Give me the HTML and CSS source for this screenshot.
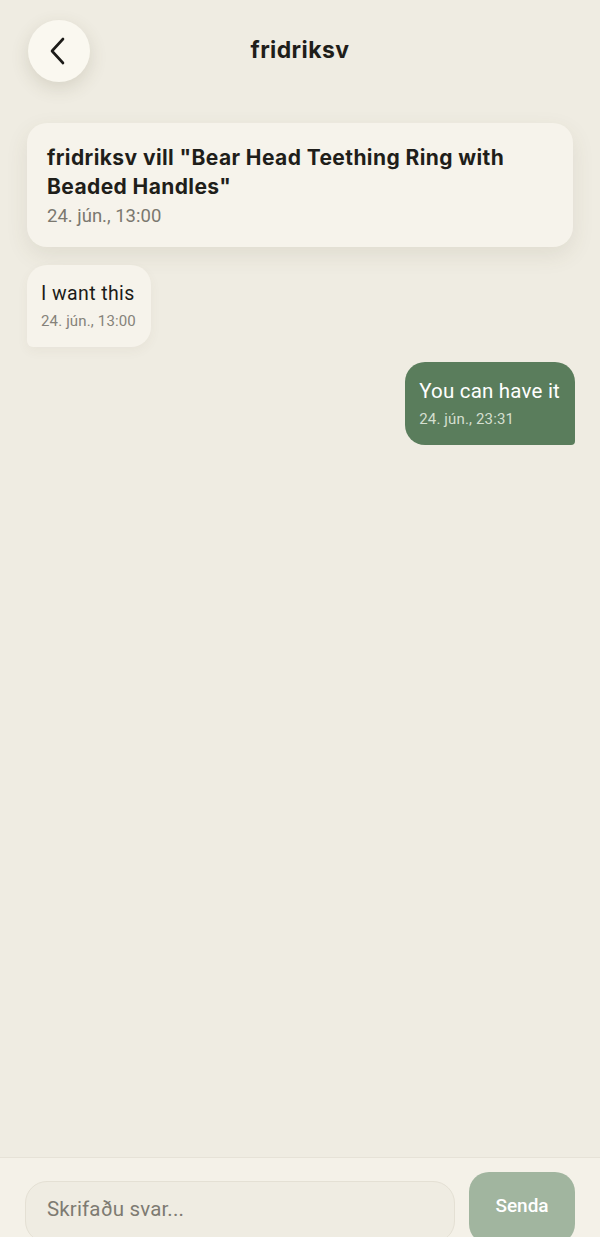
FILE: index.html
```html
<!DOCTYPE html>
<html lang="is">
<head>
    <meta charset="UTF-8">
    <meta name="viewport" content="width=device-width, initial-scale=1.0">
    <title>fridriksv</title>
    <link rel="stylesheet" href="styles.css">
</head>
<body>
    <div class="chat-page">
        <div class="chat-header">
            <button class="back-button" aria-label="Til baka">
                <svg width="16" height="28" viewBox="0 0 16 28">
                    <path d="M14 2 L3 14 L14 26" fill="none" stroke="#1c1b18" stroke-width="2.6" stroke-linecap="round" stroke-linejoin="round"/>
                </svg>
            </button>
            <h1 class="chat-title">fridriksv</h1>
            <div></div>
        </div>

        <div class="messages">
            <div class="request-card">
                <div class="request-text">fridriksv vill "Bear Head Teething Ring with Beaded Handles"</div>
                <div class="request-date">24. jún., 13:00</div>
            </div>

            <div class="bubble incoming">
                <div class="bubble-text">I want this</div>
                <div class="bubble-date">24. jún., 13:00</div>
            </div>

            <div class="bubble outgoing">
                <div class="bubble-text">You can have it</div>
                <div class="bubble-date">24. jún., 23:31</div>
            </div>
        </div>

        <div class="reply-bar">
            <input class="reply-input" type="text" placeholder="Skrifaðu svar...">
            <button class="send-button">Senda</button>
        </div>
    </div>
</body>
</html>
```

FILE: styles.css
```css
body {
    margin: 0;
    background: #efece2;
    font-family: Roboto, "Noto Sans", sans-serif;
    color: #1c1b18;
}
.chat-page {
    height: 1237px;
    display: flex;
    flex-direction: column;
    overflow: hidden;
}
.chat-header {
    display: grid;
    grid-template-columns: 1fr auto 1fr;
    align-items: center;
    padding: 20px 28px 0;
}
.back-button {
    width: 62px;
    height: 62px;
    border: none;
    border-radius: 50%;
    background: #faf8f0;
    box-shadow: 0 6px 18px rgba(90, 80, 50, 0.16);
    display: flex;
    align-items: center;
    justify-content: center;
    padding: 0 4px 0 0;
    cursor: pointer;
}
.chat-title {
    margin: 0;
    font-family: Inter, sans-serif;
    font-size: 23px;
    font-weight: 700;
    letter-spacing: 0.4px;
    color: #1f1e1a;
    padding-bottom: 2px;
}
.messages {
    flex: 1;
    display: flex;
    flex-direction: column;
    align-items: flex-start;
    padding: 41px 27px 0 27px;
}
.request-card {
    align-self: stretch;
    background: #f6f3eb;
    border-radius: 20px;
    padding: 20px;
    box-shadow: 0 8px 22px rgba(90, 80, 50, 0.10);
    margin-bottom: 18px;
}
.request-text {
    font-family: Inter, sans-serif;
    font-weight: 700;
    font-size: 21px;
    line-height: 29px;
    letter-spacing: 0.4px;
    color: #1f1e1a;
}
.request-date {
    margin-top: 4px;
    font-size: 18.5px;
    line-height: 22px;
    color: #7b786f;
}
.bubble {
    border-radius: 20px;
    padding: 16px 15px 17px 14px;
}
.incoming {
    background: #f6f3eb;
    border-bottom-left-radius: 6px;
    margin-bottom: 15px;
    box-shadow: 0 4px 12px rgba(90, 80, 50, 0.05);
}
.outgoing {
    align-self: flex-end;
    margin-right: -2px;
    padding-top: 17px;
    background: #5a7d5c;
    border-bottom-right-radius: 4px;
    color: #ffffff;
}
.bubble-text {
    font-size: 19.5px;
    line-height: 25px;
    letter-spacing: 0.4px;
}
.outgoing .bubble-text {
    font-size: 20.5px;
    letter-spacing: 0.2px;
}
.bubble-date {
    margin-top: 6px;
    font-size: 15px;
    line-height: 18px;
    letter-spacing: 0.15px;
    color: #85827a;
}
.outgoing .bubble-date {
    color: #d4dfd0;
}
.reply-bar {
    height: 80px;
    box-sizing: border-box;
    display: flex;
    align-items: flex-start;
    gap: 14px;
    padding: 14px 25px 0 25px;
    background: #f4f1e8;
    border-top: 1px solid #e6e2d7;
}
.reply-input {
    flex: 1;
    margin-top: 9px;
    height: 62px;
    box-sizing: border-box;
    border: 1px solid #e4e0d4;
    border-radius: 22px;
    background: #efece2;
    padding: 0 0 6px 21px;
    font-family: Roboto, sans-serif;
    font-size: 20.5px;
    letter-spacing: 0.15px;
    color: #1c1b18;
    outline: none;
}
.reply-input::placeholder {
    color: #7e7b72;
}
.send-button {
    width: 106px;
    height: 72px;
    border: none;
    border-radius: 20px;
    background: #a1b59f;
    color: #ffffff;
    font-family: Roboto, sans-serif;
    font-weight: 500;
    font-size: 19px;
    padding: 0 0 6px 0;
    cursor: pointer;
}
```
